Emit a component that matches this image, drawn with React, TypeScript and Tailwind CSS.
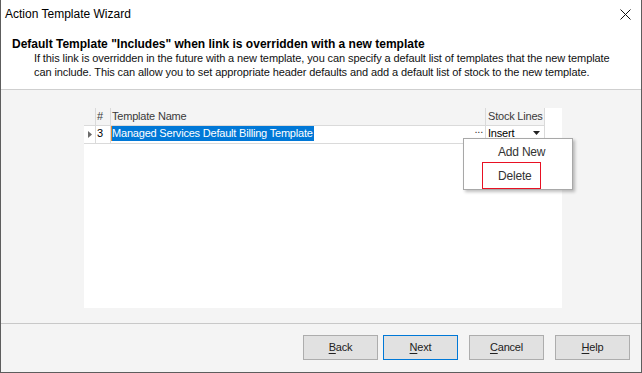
import React from "react";

const font = "font-['Segoe_UI','Liberation_Sans',Arial,sans-serif]";
const sm = "text-[11px] tracking-[-0.2px]";

function Btn({ label, first, focused }: { label: string; first: string; focused?: boolean }) {
  return (
    <button
      className={`w-[75px] h-[25px] flex items-center justify-center bg-[#e1e1e1] ${sm} text-[#222] border ${
        focused ? "border-[#0078d7]" : "border-[#adadad]"
      }`}
    >
      <span>
        <span className="underline underline-offset-2">{first}</span>
        {label}
      </span>
    </button>
  );
}

export default function App() {
  return (
    <div
      className={`w-[642px] h-[373px] bg-[#f4f4f4] border-l border-r border-b border-[#5d5d5d] flex flex-col ${font} text-[12px] text-black overflow-hidden`}
    >
      {/* Header */}
      <div className="bg-white border-b border-[#cfcfcf] h-[90px] flex flex-col">
        <div className="h-[27px] flex items-center justify-between pl-[4px] pr-[10px]">
          <span className="text-[12px] text-black">Action Template Wizard</span>
          <svg width="11" height="11" viewBox="0 0 11 11" className="mt-[1px]">
            <path d="M0.5 0.5 L10.5 10.5 M10.5 0.5 L0.5 10.5" stroke="#111" strokeWidth="1" fill="none" />
          </svg>
        </div>
        <div className="mt-[10px] pl-[11px] font-bold leading-[14px] whitespace-nowrap">
          Default Template "Includes" when link is overridden with a new template
        </div>
        <div className="pl-[33px] leading-[14px] text-[#111] whitespace-nowrap text-[11px] tracking-[-0.1px]">
          <div>
            If this link is overridden in the future with a new template, you can specify a default list of templates that the new template
          </div>
          <div>
            can include. This can allow you to set appropriate header defaults and add a default list of stock to the new template.
          </div>
        </div>
      </div>

      {/* Body */}
      <div className="h-[234px] border-b border-[#c8c8c8]">
        <div className={`relative ml-[83px] mt-[18px] w-[478px] h-[200px] bg-white ${sm} whitespace-nowrap`}>
          {/* header row */}
          <div className="flex h-[18px] text-[#3a3a3a] leading-[17px]">
            <div className="w-[12px] bg-[#f4f4f4] border-r border-b border-[#dadada]" />
            <div className="w-[15px] bg-[#f4f4f4] border-r border-b border-[#dadada] pl-[1px]">#</div>
            <div className="w-[375px] bg-[#f4f4f4] border-r border-b border-[#dadada] pl-[1px]">Template Name</div>
            <div className="w-[59px] bg-[#f4f4f4] border-r border-b border-[#dadada] pl-[2px]">Stock Lines</div>
          </div>
          {/* data row */}
          <div className="flex h-[18px] leading-[15px]">
            <div className="w-[12px] border-r border-b border-[#dadada] flex items-center justify-center">
              <svg width="4" height="7" viewBox="0 0 4 7">
                <path d="M0 0 L4 3.5 L0 7 Z" fill="#6b6b6b" />
              </svg>
            </div>
            <div className="w-[15px] border-r border-b border-[#dadada] pl-[1px]">3</div>
            <div className="w-[375px] border-r border-b border-[#dadada] flex items-start relative">
              <span className="w-[1px] h-[15px] bg-[#e8892b]" />
              <span className="bg-[#0078d7] text-white h-[15px] leading-[15px] pr-[1px]">
                Managed Services Default Billing Template
              </span>
              <span className="absolute right-[2px] top-[-4px] text-[#333] z-10">...</span>
            </div>
            <div className="w-[59px] border-r border-b border-[#dadada] flex items-start justify-between pl-[2px] pr-[4px]">
              <span className="leading-[14px]">Insert</span>
              <svg width="7" height="4" viewBox="0 0 7 4" className="mt-[5px]">
                <path d="M0 0 L7 0 L3.5 4 Z" fill="#222" />
              </svg>
            </div>
          </div>

          {/* popup menu */}
          <div className="absolute left-[379px] top-[30px] w-[110px] h-[52px] bg-white border border-[#a8a8a8] shadow-[2px_2px_3px_rgba(0,0,0,0.25)] text-[#333] text-[12px] tracking-[-0.2px] z-20">
            <div className="pl-[34px] pt-[5px] h-[23px] leading-[17px]">Add New</div>
            <div className="ml-[18px] w-[59px] h-[27px] border border-[#e81123] flex items-center pl-[15px]">Delete</div>
          </div>
        </div>
      </div>

      {/* Footer */}
      <div className="flex-1 flex justify-end items-start pt-[11px] pr-[11px]">
        <div className="flex">
          <Btn first="B" label="ack" />
          <div className="w-[5px]" />
          <Btn first="N" label="ext" focused />
          <div className="w-[11px]" />
          <Btn first="C" label="ancel" />
          <div className="w-[11px]" />
          <Btn first="H" label="elp" />
        </div>
      </div>
    </div>
  );
}
